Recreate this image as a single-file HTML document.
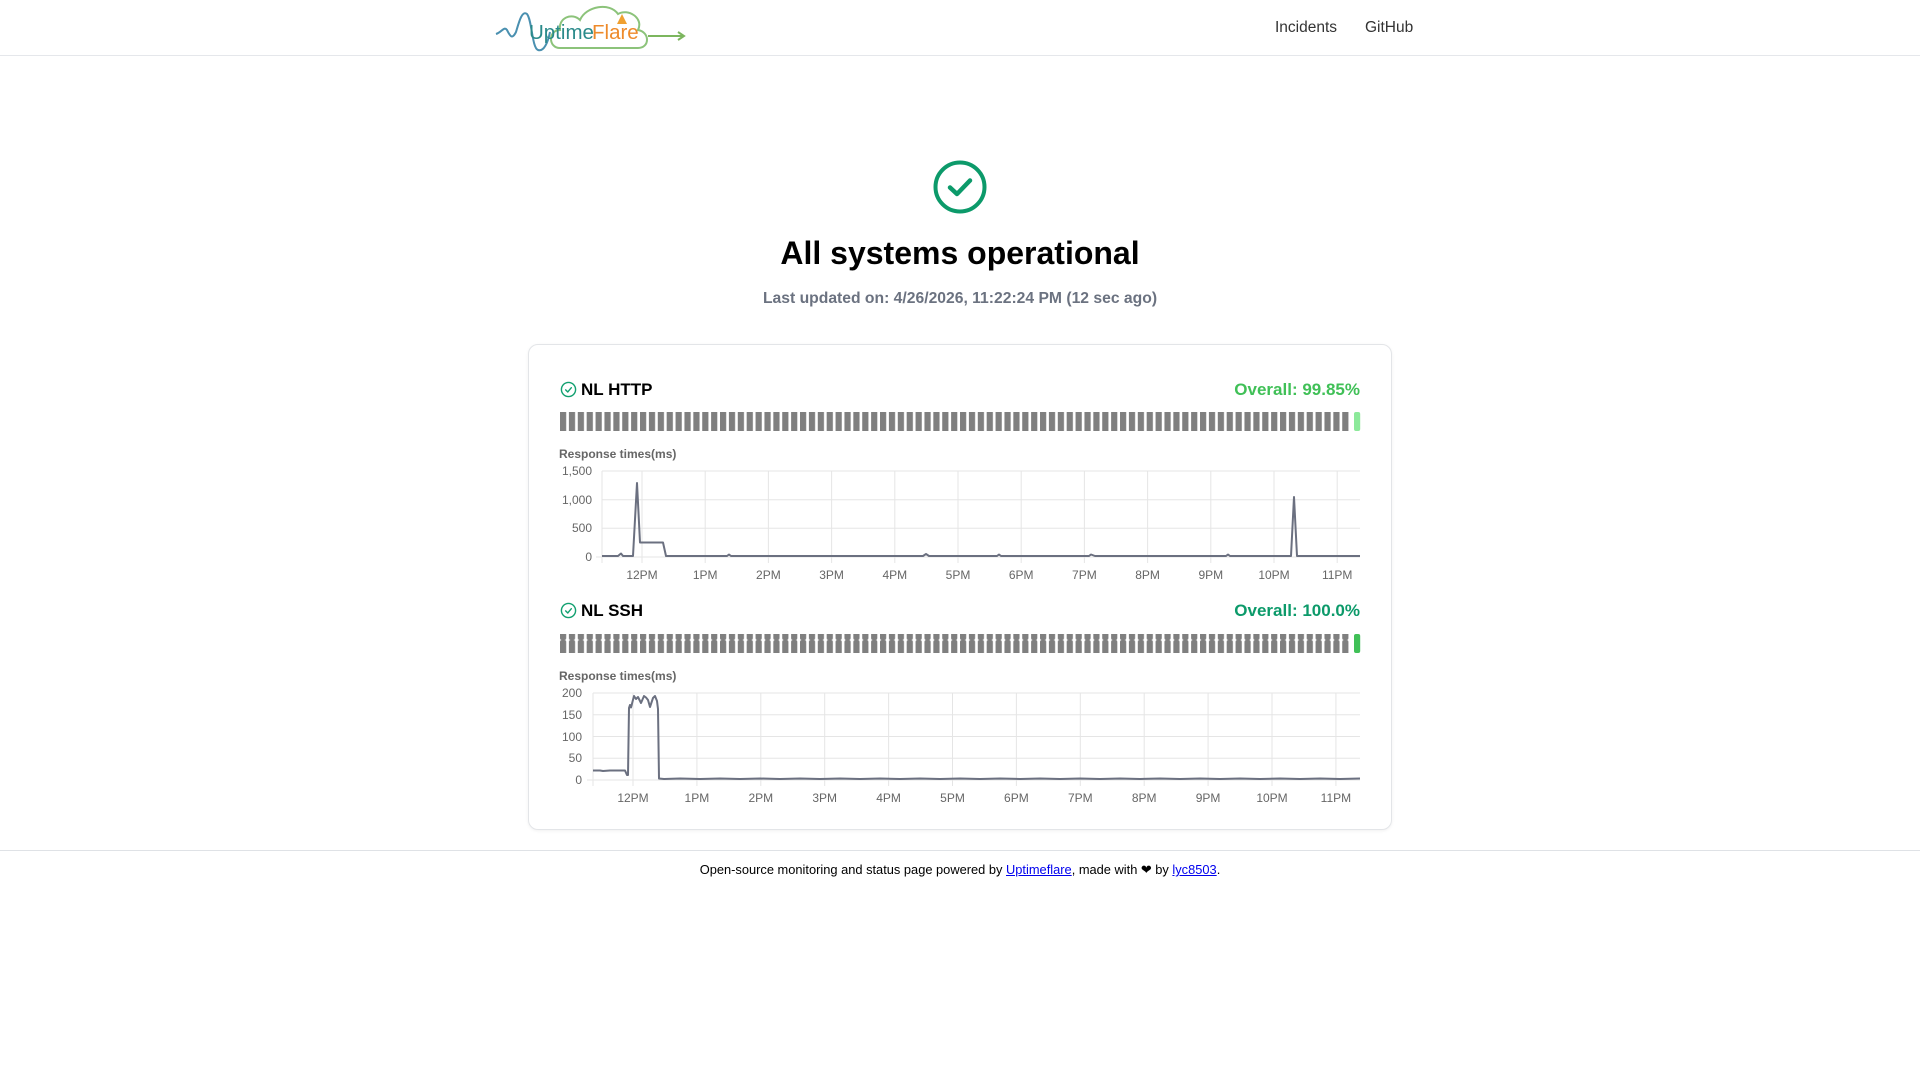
<!DOCTYPE html>
<html><head><meta charset="utf-8"><style>
*{margin:0;padding:0;box-sizing:border-box}
body{width:1920px;height:1080px;background:#fff;font-family:"Liberation Sans",Arial,sans-serif;position:relative;overflow:hidden;color:#000}
.a{position:absolute}
.hdr{left:0;top:0;width:1920px;height:56px;border-bottom:1px solid #e5e7eb}
.nav{top:19px;font-size:15.5px;color:#333}
.card{left:528px;top:344px;width:864px;height:486px;border:1px solid #e3e5e8;border-radius:10px;box-shadow:0 1px 3px rgba(0,0,0,.06)}
.mt{font-size:17px;font-weight:bold;}
.ov{font-size:17px;font-weight:bold;}
.rt{font-size:12px;font-weight:bold;color:#666}
</style></head><body>
<div class="a hdr"></div>
<svg class="a" style="left:494px;top:2px" width="196" height="52" viewBox="0 0 196 52">
 <path d="M2 32 C8 30 10 24 13 28 C16 34 18 38 22 30 C25 20 28 8 33 12 C38 18 38 46 44 48 C50 50 54 40 56 30" fill="none" stroke="#4a90b0" stroke-width="2"/>
 <path d="M66 46 C54 46 54 28 66 28 C64 16 78 10 86 18 C92 4 116 0 124 12 C134 6 150 16 144 28 C156 30 156 46 144 46 Z" fill="none" stroke="#8cc37a" stroke-width="2"/>
 <path d="M154 34 L190 34 M184 30 L190 34 L184 38" fill="none" stroke="#7cb65e" stroke-width="2"/>
 <path d="M123 22 L133 22 L128 12 Z" fill="#f0a030"/>
 <text x="35" y="37" font-family="Liberation Sans,sans-serif" font-size="20.5" fill="#2a8a8a">Uptime</text>
 <text x="98" y="37" font-family="Liberation Sans,sans-serif" font-size="20.5" fill="#ee8a2a">Flare</text>
</svg>
<div class="a nav" style="left:1275px">Incidents</div>
<div class="a nav" style="left:1365px">GitHub</div>

<svg class="a" style="left:933px;top:160px" width="54" height="54" viewBox="0 0 54 54">
 <circle cx="27" cy="27" r="24.5" fill="none" stroke="#0c9a6a" stroke-width="4"/>
 <path d="M17 27.5 L24 34 L37 20.5" fill="none" stroke="#0c9a6a" stroke-width="4.5" stroke-linecap="round" stroke-linejoin="round"/>
</svg>
<div class="a" style="left:0;width:1920px;top:235px;text-align:center;font-size:32px;font-weight:bold">All systems operational</div>
<div class="a" style="left:0;width:1920px;top:290px;text-align:center;font-size:15.7px;font-weight:bold;color:#6b7280">Last updated on: 4/26/2026, 11:22:24 PM (12 sec ago)</div>

<div class="a card"></div>

<svg class="a" style="left:560px;top:381px" width="17" height="17" viewBox="0 0 24 24"><circle cx="12" cy="12" r="10" fill="none" stroke="#12a070" stroke-width="2"/><path d="M8 12.5l3 3 5-6" fill="none" stroke="#12a070" stroke-width="2" stroke-linecap="round" stroke-linejoin="round"/></svg>
<div class="a mt" style="left:581px;top:380px">NL HTTP</div>
<div class="a ov" style="right:560px;top:380px;color:#40c057">Overall: 99.85%</div>

<svg class="a" style="left:0;top:0" width="1920" height="1080">
 <defs><pattern id="bp" x="560" y="0" width="8.889" height="40" patternUnits="userSpaceOnUse"><rect x="0" y="0" width="6.2" height="40" rx="2" fill="#7f7f7f"/></pattern></defs>
 <rect x="560" y="412" width="791" height="19" fill="url(#bp)"/>
 <rect x="1354" y="412" width="6.2" height="19" rx="2" fill="#8ce99a"/>
 <rect x="560" y="634" width="791" height="19" fill="url(#bp)"/>
 <rect x="1354" y="634" width="6.2" height="19" rx="2" fill="#40c057"/>

 <g stroke="#e5e5e5" stroke-width="1">
  <line x1="602" y1="471" x2="1360" y2="471"/><line x1="602" y1="499.7" x2="1360" y2="499.7"/><line x1="602" y1="528.3" x2="1360" y2="528.3"/><line x1="596" y1="557" x2="1360" y2="557"/>
  <line x1="602" y1="471" x2="602" y2="563"/>
  <line x1="642" y1="471" x2="642" y2="563"/><line x1="705.2" y1="471" x2="705.2" y2="563"/><line x1="768.4" y1="471" x2="768.4" y2="563"/><line x1="831.6" y1="471" x2="831.6" y2="563"/><line x1="894.8" y1="471" x2="894.8" y2="563"/><line x1="958" y1="471" x2="958" y2="563"/><line x1="1021.2" y1="471" x2="1021.2" y2="563"/><line x1="1084.4" y1="471" x2="1084.4" y2="563"/><line x1="1147.6" y1="471" x2="1147.6" y2="563"/><line x1="1210.8" y1="471" x2="1210.8" y2="563"/><line x1="1274" y1="471" x2="1274" y2="563"/><line x1="1337.2" y1="471" x2="1337.2" y2="563"/>
 </g>
 <g font-size="12" fill="#666" font-family="Liberation Sans,sans-serif" text-anchor="end">
  <text x="592" y="475">1,500</text><text x="592" y="504">1,000</text><text x="592" y="532">500</text><text x="592" y="561">0</text>
 </g>
 <g font-size="12" fill="#666" font-family="Liberation Sans,sans-serif" text-anchor="middle">
  <text x="642" y="579">12PM</text><text x="705.2" y="579">1PM</text><text x="768.4" y="579">2PM</text><text x="831.6" y="579">3PM</text><text x="894.8" y="579">4PM</text><text x="958" y="579">5PM</text><text x="1021.2" y="579">6PM</text><text x="1084.4" y="579">7PM</text><text x="1147.6" y="579">8PM</text><text x="1210.8" y="579">9PM</text><text x="1274" y="579">10PM</text><text x="1337.2" y="579">11PM</text>
 </g>
 <path d="M602 556 L618 556 L621 553.5 L623 556 L633 556 L637 483 L640 542.5 L663 542.5 L666 556 L727 556 L729 554.5 L731 556 L923 556 L926 554 L929 556 L997 556 L999 554.5 L1001 556 L1089 556 L1091 554.5 L1095 556 L1226 556 L1228 554.5 L1230 556 L1291 556 L1294 497 L1297 556 L1360 556" fill="none" stroke="#6b7080" stroke-width="2" stroke-linejoin="round"/>

 <g stroke="#e5e5e5" stroke-width="1">
  <line x1="593" y1="693" x2="1360" y2="693"/><line x1="593" y1="714.75" x2="1360" y2="714.75"/><line x1="593" y1="736.5" x2="1360" y2="736.5"/><line x1="593" y1="758.25" x2="1360" y2="758.25"/><line x1="587" y1="780" x2="1360" y2="780"/>
  <line x1="593" y1="693" x2="593" y2="786"/>
  <line x1="633" y1="693" x2="633" y2="786"/><line x1="696.9" y1="693" x2="696.9" y2="786"/><line x1="760.8" y1="693" x2="760.8" y2="786"/><line x1="824.7" y1="693" x2="824.7" y2="786"/><line x1="888.6" y1="693" x2="888.6" y2="786"/><line x1="952.5" y1="693" x2="952.5" y2="786"/><line x1="1016.4" y1="693" x2="1016.4" y2="786"/><line x1="1080.3" y1="693" x2="1080.3" y2="786"/><line x1="1144.2" y1="693" x2="1144.2" y2="786"/><line x1="1208.1" y1="693" x2="1208.1" y2="786"/><line x1="1272" y1="693" x2="1272" y2="786"/><line x1="1335.9" y1="693" x2="1335.9" y2="786"/>
 </g>
 <g font-size="12" fill="#666" font-family="Liberation Sans,sans-serif" text-anchor="end">
  <text x="582" y="697">200</text><text x="582" y="719">150</text><text x="582" y="741">100</text><text x="582" y="762">50</text><text x="582" y="784">0</text>
 </g>
 <g font-size="12" fill="#666" font-family="Liberation Sans,sans-serif" text-anchor="middle">
  <text x="633" y="802">12PM</text><text x="696.9" y="802">1PM</text><text x="760.8" y="802">2PM</text><text x="824.7" y="802">3PM</text><text x="888.6" y="802">4PM</text><text x="952.5" y="802">5PM</text><text x="1016.4" y="802">6PM</text><text x="1080.3" y="802">7PM</text><text x="1144.2" y="802">8PM</text><text x="1208.1" y="802">9PM</text><text x="1272" y="802">10PM</text><text x="1335.9" y="802">11PM</text>
 </g>
 <path d="M593 770.5 L600 770.5 L603 771 L610 770.5 L625 770.5 L627 775 L628 775 L629 708 L630 705 L631 707.5 L634 696 L636 699 L638 697 L641 703 L644 696 L646 697.5 L648 700 L650 707 L653 698 L655 696 L657 701 L658 709 L659 778.5 L664 779 L680 778.5 L700 779 L720 778.5 L740 779 L760 778.5 L780 779 L800 778.5 L820 779 L840 778.5 L860 779 L880 778.5 L900 779 L920 778.5 L940 779 L960 778.5 L980 779 L1000 778.5 L1020 779 L1040 778.5 L1060 779 L1080 778.5 L1100 779 L1120 778.5 L1140 779 L1160 778.5 L1180 779 L1200 778.5 L1220 779 L1240 778.5 L1260 779 L1280 778.5 L1300 779 L1320 778.5 L1340 779 L1360 778.5" fill="none" stroke="#6b7080" stroke-width="2" stroke-linejoin="round"/>
</svg>

<div class="a rt" style="left:559px;top:447px">Response times(ms)</div>

<svg class="a" style="left:560px;top:602px" width="17" height="17" viewBox="0 0 24 24"><circle cx="12" cy="12" r="10" fill="none" stroke="#12a070" stroke-width="2"/><path d="M8 12.5l3 3 5-6" fill="none" stroke="#12a070" stroke-width="2" stroke-linecap="round" stroke-linejoin="round"/></svg>
<div class="a mt" style="left:581px;top:601px">NL SSH</div>
<div class="a ov" style="right:560px;top:601px;color:#0c9a6a">Overall: 100.0%</div>
<div class="a rt" style="left:559px;top:669px">Response times(ms)</div>

<div class="a" style="left:0;top:850px;width:1920px;border-top:1px solid #dfe2e6"></div>
<div class="a" style="left:0;width:1920px;top:862px;text-align:center;font-size:12.85px;color:#000">Open-source monitoring and status page powered by <span style="color:#00e;text-decoration:underline">Uptimeflare</span>, made with ❤ by <span style="color:#00e;text-decoration:underline">lyc8503</span>.</div>
</body></html>
